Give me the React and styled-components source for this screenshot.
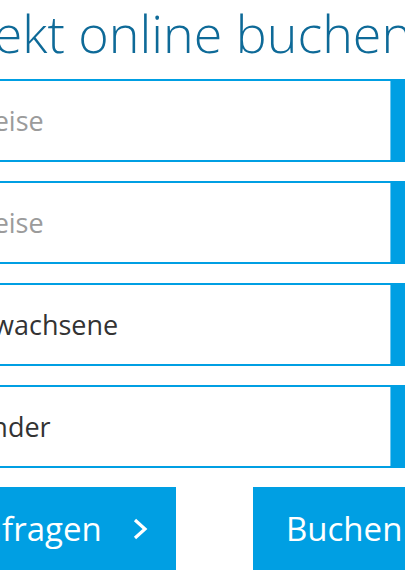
import React from "react";
import styled, { createGlobalStyle } from "styled-components";

const GlobalStyle = createGlobalStyle`
  html, body {
    margin: 0;
    padding: 0;
    background: #ffffff;
    overflow: hidden;
  }
  body {
    font-family: "Open Sans", "Noto Sans", sans-serif;
  }
`;

const BLUE = "#009fe3";

const Page = styled.div`
  margin-left: -70px;
  width: 569px;
  padding-top: 2px;
  box-sizing: border-box;
`;

const Title = styled.h2`
  margin: 0 0 15px -5px;
  font-family: "Open Sans", sans-serif;
  font-weight: 300;
  font-size: 52px;
  line-height: 62px;
  color: #0e6a98;
  white-space: nowrap;
`;

const Form = styled.form`
  display: flex;
  flex-direction: column;
  gap: 19px;
`;

const Field = styled.div`
  display: flex;
  height: 83px;
  box-sizing: border-box;
  border: 2px solid ${BLUE};
  background: #fff;
`;

const FieldText = styled.div`
  flex: 1;
  display: flex;
  align-items: center;
  padding-left: ${(p) => p.$indent}px;
  font-size: 27px;
  color: ${(p) => (p.$placeholder ? "#9b9b9b" : "#333333")};
  white-space: nowrap;
`;

const FieldAddon = styled.div`
  width: 106px;
  background: ${BLUE};
  border-left: 1px solid #6cc6ef;
`;

const ButtonRow = styled.div`
  display: flex;
  justify-content: space-between;
`;

const Button = styled.button`
  display: flex;
  align-items: center;
  gap: 31px;
  width: 246px;
  height: 83px;
  padding: 0 0 0 ${(p) => p.$pad}px;
  border: none;
  background: ${BLUE};
  color: #fff;
  font-family: "Open Sans", sans-serif;
  font-size: 33px;
  cursor: pointer;
`;

const Chevron = () => (
  <svg width="15" height="22" viewBox="0 0 15 22" aria-hidden="true">
    <polyline
      points="2,2 12,11 2,20"
      fill="none"
      stroke="#fff"
      strokeWidth="3.2"
      strokeLinecap="butt"
      strokeLinejoin="miter"
    />
  </svg>
);

const fields = [
  { label: "Anreise", placeholder: true, indent: 17 },
  { label: "Abreise", placeholder: true, indent: 17 },
  { label: "Erwachsene", placeholder: false, indent: 35 },
  { label: "Kinder", placeholder: false, indent: 36 },
];

export default function App() {
  return (
    <>
      <GlobalStyle />
      <Page>
        <Title>Direkt online buchen</Title>
        <Form onSubmit={(e) => e.preventDefault()}>
          {fields.map((f) => (
            <Field key={f.label}>
              <FieldText $placeholder={f.placeholder} $indent={f.indent}>
                {f.label}
              </FieldText>
              <FieldAddon />
            </Field>
          ))}
          <ButtonRow>
            <Button type="button" $pad={31}>
              Anfragen
              <Chevron />
            </Button>
            <Button type="submit" $pad={33}>
              Buchen
            </Button>
          </ButtonRow>
        </Form>
      </Page>
    </>
  );
}
